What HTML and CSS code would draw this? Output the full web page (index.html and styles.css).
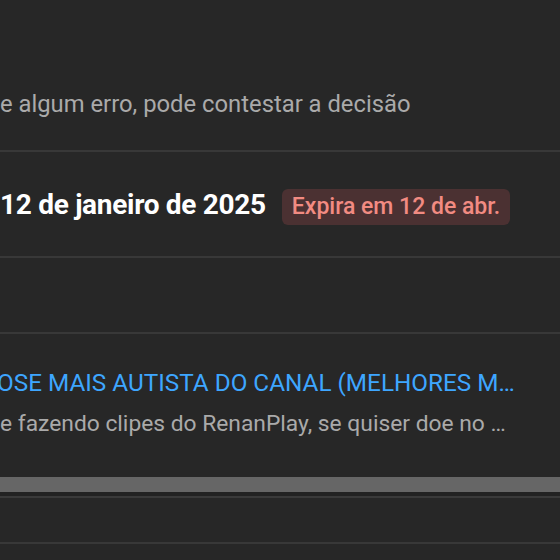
FILE: index.html
```html
<!DOCTYPE html>
<html lang="pt">
<head>
<meta charset="utf-8">
<link rel="stylesheet" href="styles.css">
</head>
<body>
<div class="page">
  <section class="row row-notice">
    <p class="muted">e algum erro, pode contestar a decisão</p>
  </section>
  <section class="row row-date">
    <span class="date">12 de janeiro de 2025</span>
    <span class="badge">Expira em 12 de abr.</span>
  </section>
  <section class="row row-empty"></section>
  <section class="row row-video">
    <a class="title" href="#">OSE MAIS AUTISTA DO CANAL (MELHORES M…</a>
    <p class="desc">e fazendo clipes do RenanPlay, se quiser doe no …</p>
  </section>
  <div class="scrollbar"><div class="thumb"></div></div>
  <section class="row row-last"></section>
</div>
</body>
</html>
```
FILE: styles.css
```css
html, body {
  margin: 0;
  padding: 0;
  background: #272727;
  overflow: hidden;
}
body {
  width: 560px;
  height: 560px;
  font-family: Roboto, "Noto Sans", "Liberation Sans", sans-serif;
  color: #f1f1f1;
}
.page {
  display: flex;
  flex-direction: column;
}
.row {
  border-bottom: 2px solid #383838;
  display: flex;
}
.row-notice {
  height: 150px;
  align-items: flex-start;
}
.muted {
  margin: 89px 0 0 0;
  font-size: 23.8px;
  line-height: 30px;
  color: #aaaaaa;
  white-space: nowrap;
}
.row-date {
  height: 104px;
  align-items: center;
  gap: 16px;
  padding-left: 0;
}
.date {
  font-size: 28px;
  font-weight: 700;
  color: #ffffff;
  letter-spacing: -0.3px;
  white-space: nowrap;
}
.badge {
  margin-top: 5px;
  background: #4b3132;
  color: #f28b82;
  font-size: 23px;
  font-weight: 500;
  line-height: 36px;
  padding: 0 10px;
  border-radius: 6px;
  white-space: nowrap;
}
.row-empty {
  height: 74px;
}
.row-video {
  height: 143px;
  flex-direction: column;
  border-bottom: none;
  padding-top: 34px;
  box-sizing: border-box;
}
.title {
  display: block;
  margin-left: -3px;
  font-size: 24.3px;
  line-height: 30px;
  color: #3ea6ff;
  text-decoration: none;
  white-space: nowrap;
}
.desc {
  margin: 11px 0 0 0;
  font-size: 22.8px;
  line-height: 30px;
  color: #aaaaaa;
  white-space: nowrap;
}
.scrollbar {
  height: 19px;
  border-bottom: 2px solid #3a3a3a;
  background: #222;
}
.thumb {
  height: 15px;
  background: #666666;
}
.row-last {
  height: 44px;
}
```
